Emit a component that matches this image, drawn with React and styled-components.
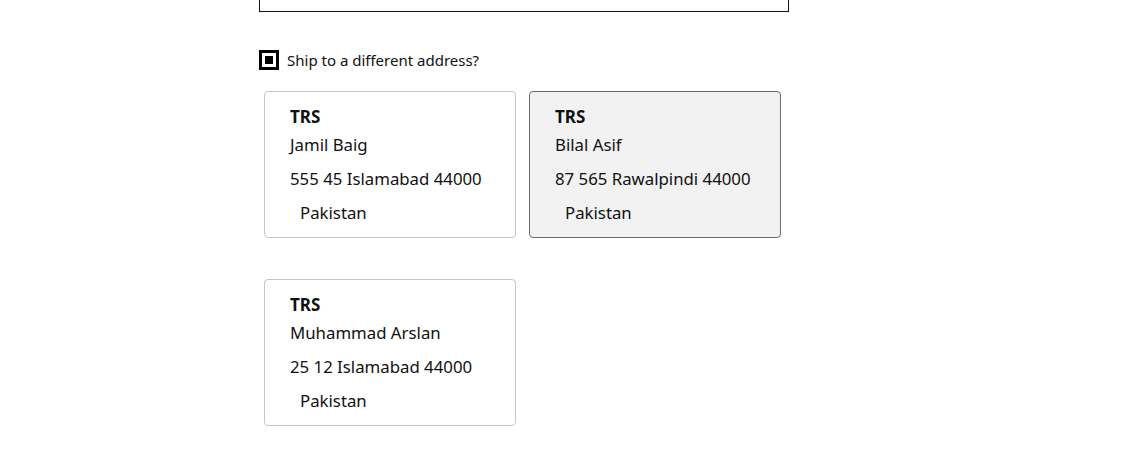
import styled, { createGlobalStyle } from "styled-components";

const GlobalStyle = createGlobalStyle`
  html, body {
    margin: 0;
    padding: 0;
    background: #ffffff;
  }
  body {
    font-family: "Noto Sans", "Open Sans", sans-serif;
    color: #111111;
  }
`;

const Page = styled.div`
  width: 530px;
  padding-left: 259px;
`;

const NotesBox = styled.div`
  height: 11px;
  border: 1px solid #111111;
  border-top: none;
`;

const CheckRow = styled.label`
  display: flex;
  align-items: center;
  gap: 8px;
  margin-top: 38px;
  font-size: 15px;
  line-height: 20px;
  cursor: pointer;
`;

const CheckBox = styled.span`
  box-sizing: border-box;
  width: 20px;
  height: 20px;
  border: 3px solid #000000;
  padding: 3px;
  background: #ffffff;

  &::after {
    content: "";
    display: block;
    width: 8px;
    height: 8px;
    background: ${(p) => (p.$checked ? "#000000" : "transparent")};
  }
`;

const CardGrid = styled.div`
  display: grid;
  grid-template-columns: 252px 252px;
  column-gap: 13px;
  row-gap: 41px;
  margin-top: 21px;
  margin-left: 5px;
`;

const Card = styled.div`
  box-sizing: border-box;
  height: 147px;
  padding: 13px 20px 12px 25px;
  border: 1px solid ${(p) => (p.$selected ? "#6b6b6b" : "#cbc3c3")};
  border-radius: 4px;
  background: ${(p) => (p.$selected ? "#f2f2f2" : "#ffffff")};
  cursor: pointer;
`;

const Company = styled.div`
  font-size: 17px;
  font-weight: 700;
  line-height: 24px;
`;

const Line = styled.div`
  font-size: 16.8px;
  line-height: 24px;
  margin-top: ${(p) => p.$gap}px;
  padding-left: ${(p) => (p.$indent ? 10 : 0)}px;
  white-space: nowrap;
`;

const addresses = [
  { name: "Jamil Baig", street: "555 45 Islamabad 44000", country: "Pakistan" },
  { name: "Bilal Asif", street: "87 565 Rawalpindi 44000", country: "Pakistan", selected: true },
  { name: "Muhammad Arslan", street: "25 12 Islamabad 44000", country: "Pakistan" },
];

export default function App() {
  return (
    <>
      <GlobalStyle />
      <Page>
        <NotesBox />
        <CheckRow>
          <CheckBox $checked />
          Ship to a different address?
        </CheckRow>
        <CardGrid>
          {addresses.map((a) => (
            <Card key={a.name} $selected={a.selected}>
              <Company>TRS</Company>
              <Line $gap={4}>{a.name}</Line>
              <Line $gap={10}>{a.street}</Line>
              <Line $gap={10} $indent>
                {a.country}
              </Line>
            </Card>
          ))}
        </CardGrid>
      </Page>
    </>
  );
}
